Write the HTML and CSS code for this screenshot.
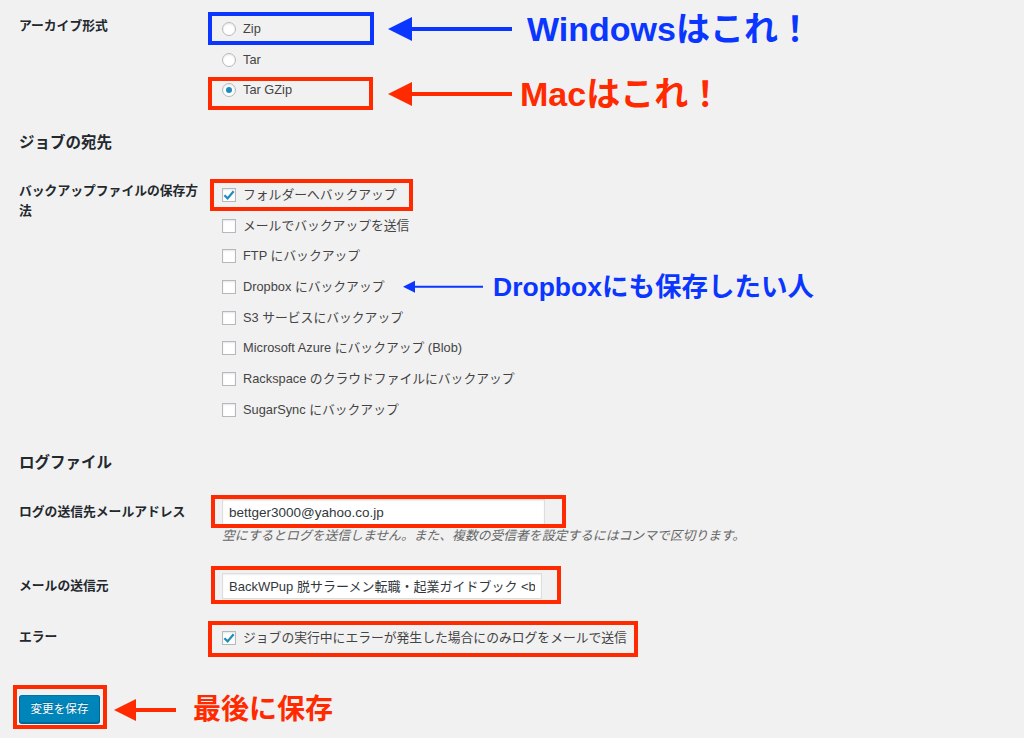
FILE: index.html
```html
<!DOCTYPE html>
<html lang="ja">
<head>
<meta charset="utf-8">
<title>BackWPup ジョブ設定</title>
<link rel="stylesheet" href="styles.css">
</head>
<body>
<div class="page">

  <div class="row row-archive">
    <div class="th">アーカイブ形式</div>
    <div class="td">
      <div class="opt mark mark-blue mark-zip">
        <span class="radio"></span>Zip
        <span class="callout callout-win blue"><span class="head"></span><span class="line"></span><span class="note">Windowsはこれ！</span></span>
      </div>
      <div class="opt"><span class="radio"></span>Tar</div>
      <div class="opt mark mark-gzip">
        <span class="radio on"></span>Tar GZip
        <span class="callout callout-mac red"><span class="head"></span><span class="line"></span><span class="note">Macはこれ！</span></span>
      </div>
    </div>
  </div>

  <h2 class="section section-dest">ジョブの宛先</h2>

  <div class="row row-dest">
    <div class="th th-dest">バックアップファイルの保存方法</div>
    <div class="td">
      <div class="opt mark mark-folder"><span class="check on"><svg viewBox="0 0 14 14" width="14" height="14"><path d="M2.4 7.2 L5.6 10.4 L11.6 3.2" fill="none" stroke="#1e8cbe" stroke-width="2.2"/></svg></span>フォルダーへバックアップ</div>
      <div class="opt"><span class="check"></span>メールでバックアップを送信</div>
      <div class="opt"><span class="check"></span>FTP にバックアップ</div>
      <div class="opt">
        <span class="check"></span>Dropbox にバックアップ
        <span class="callout callout-dbx blue"><span class="head"></span><span class="line"></span><span class="note">Dropboxにも保存したい人</span></span>
      </div>
      <div class="opt"><span class="check"></span>S3 サービスにバックアップ</div>
      <div class="opt"><span class="check"></span>Microsoft Azure にバックアップ (Blob)</div>
      <div class="opt"><span class="check"></span>Rackspace のクラウドファイルにバックアップ</div>
      <div class="opt"><span class="check"></span>SugarSync にバックアップ</div>
    </div>
  </div>

  <h2 class="section section-log">ログファイル</h2>

  <div class="row row-email">
    <div class="th th-email">ログの送信先メールアドレス</div>
    <div class="td">
      <div class="field mark mark-email"><input class="input input-email" type="text" value="bettger3000@yahoo.co.jp"></div>
      <p class="desc">空にするとログを送信しません。また、複数の受信者を設定するにはコンマで区切ります。</p>
    </div>
  </div>

  <div class="row row-from">
    <div class="th th-from">メールの送信元</div>
    <div class="td">
      <div class="field mark mark-from"><input class="input input-from" type="text" value="BackWPup 脱サラーメン転職・起業ガイドブック &lt;bettger3000@yahoo.co.jp&gt;"></div>
    </div>
  </div>

  <div class="row row-error">
    <div class="th th-error">エラー</div>
    <div class="td">
      <div class="opt mark mark-error"><span class="check on"><svg viewBox="0 0 14 14" width="14" height="14"><path d="M2.4 7.2 L5.6 10.4 L11.6 3.2" fill="none" stroke="#1e8cbe" stroke-width="2.2"/></svg></span>ジョブの実行中にエラーが発生した場合にのみログをメールで送信</div>
    </div>
  </div>

  <div class="submit">
    <div class="btn-wrap mark mark-btn">
      <button class="button" type="button">変更を保存</button>
      <span class="callout callout-save red"><span class="head"></span><span class="line"></span><span class="note">最後に保存</span></span>
    </div>
  </div>

</div>
</body>
</html>
```

FILE: styles.css
```css
*, *::before, *::after { box-sizing: border-box; }

html, body { margin: 0; padding: 0; }

body {
  width: 1024px;
  height: 738px;
  overflow: hidden;
  background: #f1f1f1;
  color: #23282d;
  font-family: "Liberation Sans", "Noto Sans CJK JP", sans-serif;
  font-size: 12.8px;
  line-height: 20px;
}

.page { padding-left: 19px; }

.row { display: flex; align-items: flex-start; }

.th {
  flex: none;
  width: 203px;
  padding-right: 13px;
  font-weight: 700;
  color: #23282d;
}

.td { flex: 1; min-width: 0; }

/* vertical rhythm */
.row-archive .th { padding-top: 16px; }
.row-archive .td { padding-top: 13.5px; }

.section {
  margin: 0;
  font-size: 15.5px;
  line-height: 20px;
  font-weight: 700;
  color: #23282d;
}
.section-dest { margin-top: 27.5px; }
.section-log { margin-top: 27.8px; }

.row-dest { margin-top: 26.5px; }
.th-dest { padding-top: 1.5px; }

.row-email { margin-top: 26.5px; }
.th-email { padding-top: 2.5px; }

.row-from { margin-top: 27.5px; }
.th-from { padding-top: 3px; }

.row-error { margin-top: 23.6px; }
.th-error { padding-top: 5px; }

.submit { margin-top: 41.6px; }

/* options */
.opt {
  position: relative;
  display: flex;
  align-items: center;
  height: 30.7px;
  color: #444;
  font-size: 12.8px;
  white-space: nowrap;
}

.radio, .check {
  flex: none;
  width: 14px;
  height: 14px;
  margin-right: 7px;
  border: 1px solid #b4b9be;
  background: #fff;
  box-shadow: inset 0 1px 2px rgba(0, 0, 0, 0.1);
  display: flex;
  align-items: center;
  justify-content: center;
}

.radio { border-radius: 50%; }
.radio.on::before {
  content: "";
  width: 6px;
  height: 6px;
  border-radius: 50%;
  background: #1e8cbe;
}

.check svg { display: block; flex: none; }

/* inputs */
.field { position: relative; }

.input {
  display: block;
  height: 26px;
  padding: 0 6px;
  border: 1px solid #ddd;
  background: #fff;
  box-shadow: inset 0 1px 2px rgba(0, 0, 0, 0.07);
  color: #32373c;
  font-family: "Liberation Sans", "Noto Sans CJK JP", sans-serif;
  font-size: 13.5px;
  outline: none;
}
.input-email { width: 323px; }
.input-from { width: 320px; font-size: 13px; }

.desc {
  margin: 2px 0 0;
  line-height: 18px;
  font-size: 12.8px;
  font-style: italic;
  color: #666;
}

/* button */
.btn-wrap { position: relative; display: inline-block; vertical-align: top; }

.button {
  display: block;
  width: 81px;
  height: 28px;
  padding: 0;
  border: 1px solid #0073aa;
  border-color: #0073aa #006799 #006799;
  border-radius: 3px;
  background: #0085ba;
  box-shadow: 0 1px 0 #006799;
  color: #fff;
  font-family: "Liberation Sans", "Noto Sans CJK JP", sans-serif;
  font-size: 11.6px;
  line-height: 26px;
  text-shadow: 0 -1px 1px #006799;
}

/* annotation frames */
.mark::after {
  content: "";
  position: absolute;
  border: 4px solid #ff2a00;
  pointer-events: none;
}
.mark-blue::after { border-color: #0a36ff; }

.mark-zip::after { left: -14px; top: -2px; width: 166px; height: 33px; }
.mark-gzip::after { left: -14px; top: 2px; width: 165px; height: 33px; }
.mark-folder::after { left: -12px; top: -1px; width: 203px; height: 32px; }
.mark-email::after { left: -11px; top: -4.5px; width: 355px; height: 33px; }
.mark-from::after { left: -11px; top: -7px; width: 350px; height: 38px; }
.mark-error::after { left: -14px; top: -1px; width: 430px; height: 36px; }
.mark-btn::after { left: -6px; top: -10px; width: 94px; height: 44px; }

/* callouts */
.callout {
  position: absolute;
  top: 50%;
  transform: translateY(-50%);
  display: flex;
  align-items: center;
  white-space: nowrap;
  font-weight: 700;
}
.blue { color: #0a36ff; }
.red { color: #ff2a00; }

.head {
  flex: none;
  width: 0;
  height: 0;
  border-top: 12px solid transparent;
  border-bottom: 12px solid transparent;
  border-right: 24px solid currentColor;
}
.line { flex: none; height: 4px; background: currentColor; }
.note { line-height: 1; }

.callout-win { left: 166px; }
.callout-win .line { width: 100px; }
.callout-win .note { margin-left: 15px; font-size: 34px; }

.callout-mac { left: 166px; top: calc(50% + 4px); }
.callout-mac .line { width: 100px; }
.callout-mac .note { margin-left: 8px; font-size: 34px; }

.callout-dbx { left: 181px; }
.callout-dbx .head { border-top-width: 6px; border-bottom-width: 6px; border-right-width: 12px; }
.callout-dbx .line { width: 68px; height: 2.4px; }
.callout-dbx .note { margin-left: 10px; font-size: 26.5px; }

.callout-save { left: 95px; top: calc(50% + 1px); }
.callout-save .head { border-top-width: 11px; border-bottom-width: 11px; border-right-width: 22px; }
.callout-save .line { width: 40px; }
.callout-save .note { margin-left: 17px; font-size: 28px; }
```
